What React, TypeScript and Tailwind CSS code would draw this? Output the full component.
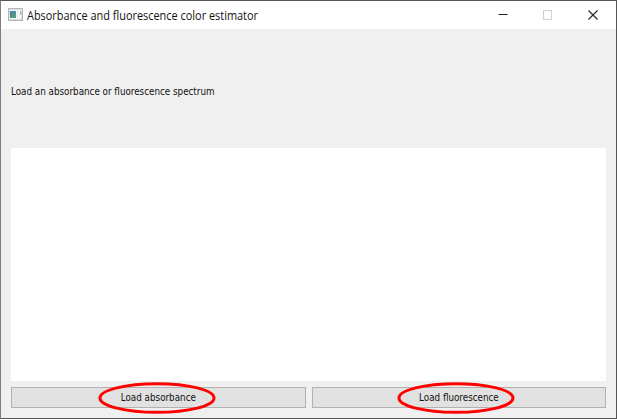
import React from "react";

function AppIcon() {
  return (
    <svg className="mb-px ml-[7px] shrink-0" width="15" height="13" viewBox="0 0 15 13" shapeRendering="crispEdges">
      <defs>
        <linearGradient id="pane" x1="0" y1="0" x2="1" y2="1">
          <stop offset="0" stopColor="#4b7fa8" />
          <stop offset="1" stopColor="#56a878" />
        </linearGradient>
      </defs>
      <rect width="15" height="13" fill="#b4b8bd" />
      <rect x="1" y="1" width="13" height="11" fill="#d9dcdf" />
      <rect x="2" y="2" width="11" height="9" fill="#fafafa" />
      <rect x="2" y="3" width="6" height="7" fill="url(#pane)" />
      <rect x="9" y="3" width="1" height="7" fill="#e1e9e6" />
      <rect x="12" y="3" width="1" height="4" fill="#91bfac" />
    </svg>
  );
}

function LoadButton({ label, width, ring }: { label: string; width: string; ring: string }) {
  return (
    <button
      className={`relative flex h-[21px] items-center justify-center border border-[#b1b1b1] bg-[#e1e1e1] ${width}`}
    >
      <span className="mr-px origin-center scale-x-[0.887] whitespace-nowrap leading-none">{label}</span>
      <svg className={`absolute top-[-7px] ${ring}`} width="120" height="34" viewBox="0 0 120 34">
        <ellipse cx="60" cy="17" rx="57" ry="14.3" fill="none" stroke="#ff0000" strokeWidth="3" />
      </svg>
    </button>
  );
}

export default function App() {
  return (
    <div className="flex h-[419px] w-[617px] flex-col overflow-hidden border border-[#555555] border-l-[#808080] bg-[#f0f0f0] font-['DejaVu_Sans_Condensed','DejaVu_Sans',sans-serif] text-[11px] text-[#111]">
      <header className="flex h-[28px] shrink-0 items-center bg-white">
        <AppIcon />
        <h1 className="ml-[4px] origin-left scale-x-[0.91] whitespace-nowrap pt-px font-['Open_Sans',sans-serif] text-[12px] leading-none">
          Absorbance and fluorescence color estimator
        </h1>
        <svg className="ml-auto mr-[17px] shrink-0" width="102" height="12" viewBox="0 0 102 12" fill="none">
          <path d="M1.5 5.5h9" stroke="#222" />
          <rect x="46.5" y="1.5" width="8" height="9" stroke="#d0d0d0" />
          <path d="M91.5 1.5l9 9M100.5 1.5l-9 9" stroke="#222" strokeWidth="1.1" />
        </svg>
      </header>
      <main className="flex flex-1 flex-col pl-[10px]">
        <p className="flex h-[119px] items-center pt-[6px] leading-none">
          <span className="origin-left scale-x-[0.887] whitespace-nowrap">
            Load an absorbance or fluorescence spectrum
          </span>
        </p>
        <div className="h-[233px] w-[595px] bg-white" />
        <div className="mt-[6px] flex gap-[6px]">
          <LoadButton label="Load absorbance" width="w-[295px]" ring="left-[85px]" />
          <LoadButton label="Load fluorescence" width="w-[294px]" ring="left-[82.5px]" />
        </div>
      </main>
    </div>
  );
}
